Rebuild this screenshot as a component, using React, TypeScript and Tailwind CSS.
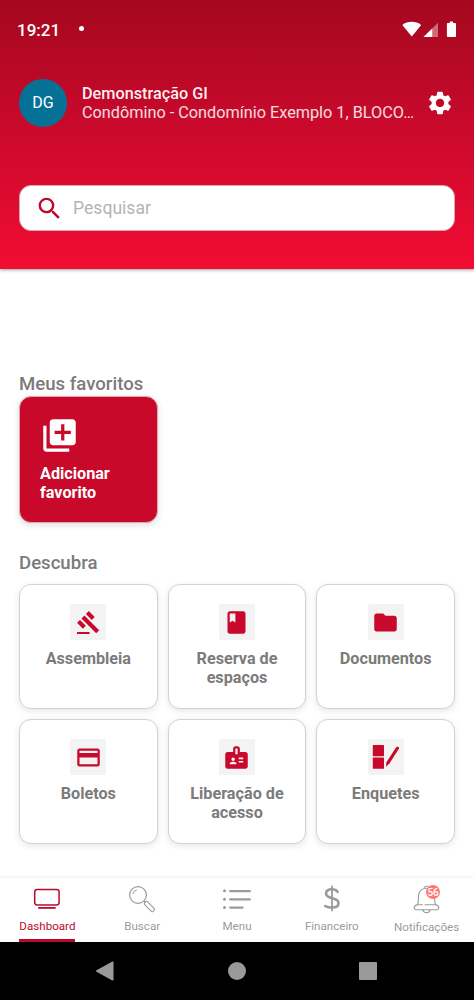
import type { ReactNode } from "react";
import {
  MdBadge,
  MdBook,
  MdCreditCard,
  MdFolder,
  MdGavel,
  MdLibraryAdd,
  MdSearch,
  MdSettings,
} from "react-icons/md";

interface Shortcut {
  label: string;
  icon: ReactNode;
}

interface NavItem {
  label: string;
  icon: ReactNode;
  active?: boolean;
  badge?: number;
}

function PollIcon() {
  return (
    <svg width="28" height="26" viewBox="0 0 28 26" fill="currentColor">
      <rect x="0.8" y="1" width="11.2" height="11.2" rx="0.6" />
      <rect x="0.8" y="13.6" width="11.2" height="11.2" rx="0.6" />
      <path d="M24.2 3.2c.9-1.2 3.6-.3 2.7 1.5L17.4 19.4l-3.4 3.4.4-4.6z" />
    </svg>
  );
}

function ScreenIcon() {
  return (
    <svg width="28" height="22" viewBox="0 0 28 22" fill="none" stroke="currentColor">
      <rect x="1.7" y="1.6" width="24.4" height="15.4" rx="2.4" strokeWidth="1.5" />
      <path d="M5.2 19.9h17.4" strokeWidth="1.8" />
    </svg>
  );
}

function MagnifierIcon() {
  return (
    <svg width="28" height="28" viewBox="0 0 28 28" fill="none" stroke="currentColor">
      <circle cx="10" cy="10" r="8.4" strokeWidth="1.2" />
      <path d="M4.8 9.2a5.4 5.4 0 0 1 4-4.3" strokeWidth="1" />
      <path d="m15.9 16 1.7 1.7" strokeWidth="1.2" />
      <rect
        x="0"
        y="-2"
        width="12"
        height="4"
        rx="1.2"
        strokeWidth="1.1"
        transform="translate(17.2 17.3) rotate(45)"
      />
    </svg>
  );
}

function ListIcon() {
  return (
    <svg width="30" height="22" viewBox="0 0 30 22" stroke="currentColor" strokeLinecap="round">
      <path d="M2.5 2.7h.01M2.5 11.2h.01M2.5 19.4h.01" strokeWidth="3" />
      <path d="M8.2 3.2h19.6M8.2 11.4h19.6M8.2 19.6h12.4" strokeWidth="2.3" />
    </svg>
  );
}

function DollarIcon() {
  return (
    <svg
      width="18"
      height="27"
      viewBox="0 0 18 27"
      fill="none"
      stroke="currentColor"
      strokeWidth="2.6"
      strokeLinecap="round"
    >
      <path d="M14.6 6.8C13.4 4.9 11.5 4.2 8.9 4.2c-3.5 0-5.9 1.7-5.9 4.4 0 6.4 12.5 2.9 12.5 9.3 0 3.1-2.7 4.6-6.4 4.6-3.1 0-5.5-.7-6.9-1.4" />
      <path d="M9 1.5v24" strokeWidth="1.8" />
    </svg>
  );
}

function BellIcon() {
  return (
    <svg
      width="27"
      height="29"
      viewBox="0 0 27 29"
      fill="none"
      stroke="currentColor"
      strokeWidth="1.1"
      strokeLinecap="round"
    >
      <path d="M11 3.2a2.6 2.6 0 0 1 5 0" />
      <path d="M4.4 19.6C6 17 5 12 5.8 8.9 6.9 5.3 9.7 3.2 13.5 3.2s6.6 2.1 7.7 5.7c.8 3.1-.2 8.1 1.4 10.7" />
      <path d="M4.4 19.6c-1.8.7-3.2 1.7-3.2 3.2 0 1.3.8 1.9 2 1.9h20.6c1.2 0 2-.6 2-1.9 0-1.5-1.4-2.5-3.2-3.2" />
      <path d="M4.4 19.7h5M12 19.7h10.6" />
      <path d="M9.8 24.7c.3 2 1.7 3 3.7 3s3.4-1 3.7-3" />
    </svg>
  );
}

const shortcuts: Shortcut[] = [
  { label: "Assembleia", icon: <MdGavel size={25} /> },
  { label: "Reserva de espaços", icon: <MdBook size={27} /> },
  { label: "Documentos", icon: <MdFolder size={27} /> },
  { label: "Boletos", icon: <MdCreditCard size={27} /> },
  { label: "Liberação de acesso", icon: <MdBadge size={27} /> },
  { label: "Enquetes", icon: <PollIcon /> },
];

const navItems: NavItem[] = [
  { label: "Dashboard", icon: <ScreenIcon />, active: true },
  { label: "Buscar", icon: <MagnifierIcon /> },
  { label: "Menu", icon: <ListIcon /> },
  { label: "Financeiro", icon: <DollarIcon /> },
  { label: "Notificações", icon: <BellIcon />, badge: 56 },
];

function StatusBar() {
  return (
    <div className="flex h-[60px] items-center justify-between px-[17px] text-white">
      <div className="flex items-center gap-[19px] pt-px">
        <span className="text-[17px] font-medium">19:21</span>
        <span className="mb-1 size-[5px] rounded-full bg-white" />
      </div>
      <svg width="55" height="18" viewBox="0 0 55 18" fill="currentColor">
        <path d="M.3 4C5.6-.4 13.9-.4 19.2 4L9.8 15.4z" />
        <path d="M21.5 16 36 1.7V16z" opacity="0.4" />
        <path d="M21.5 16 30.2 7.4V16z" />
        <path d="M47.8.6H51v1.5h2.1q.9 0 .9.9v12.2q0 .8-.9.8h-7.3q-.9 0-.9-.8V3q0-.9.9-.9h2z" />
      </svg>
    </div>
  );
}

function Header() {
  return (
    <header className="h-[269px] bg-linear-to-b from-[#a4081e] via-[#c8092b] via-45% to-[#f20c33] shadow-[0_1px_3px_rgba(0,0,0,0.4)]">
      <StatusBar />
      <div className="flex items-center px-[19px] pt-[19px]">
        <div className="flex size-12 shrink-0 items-center justify-center rounded-full bg-[#057197] text-base text-white">
          DG
        </div>
        <div className="mb-px ml-[15px] w-[334px] text-[16.25px] leading-[19px] text-white">
          <p className="font-medium text-white/95">Demonstração GI</p>
          <p className="whitespace-nowrap text-white/85">
            Condômino - Condomínio Exemplo 1, BLOCO…
          </p>
        </div>
        <MdSettings size={28} className="ml-[10px] shrink-0 text-white" />
      </div>
      <label className="mx-[19px] mt-[58px] flex h-[46px] items-center rounded-[12px] border border-[#d9a6ae] bg-white pl-[15px]">
        <MdSearch size={29} className="text-[#bb0a2d]" />
        <input
          type="text"
          placeholder="Pesquisar"
          className="ml-[9px] w-80 text-[17.6px] outline-none placeholder:text-[#b4b4b4]"
        />
      </label>
    </header>
  );
}

function ShortcutCard({ label, icon }: Shortcut) {
  return (
    <button
      type="button"
      className="flex h-[125px] flex-col items-center rounded-[12px] border border-[#d2d2d6] bg-white px-3 pt-[19px] shadow-[0_2px_6px_rgba(60,60,90,0.13)]"
    >
      <span className="flex size-9 shrink-0 items-center justify-center rounded-xs bg-[#f4f3f4] text-[#c8092b]">
        {icon}
      </span>
      <span className="mt-[9px] text-[16.2px] leading-[19px] font-bold text-[#7b7b7b]">
        {label}
      </span>
    </button>
  );
}

function BottomNav() {
  return (
    <nav className="grid h-[64px] grid-cols-5 bg-white shadow-[0_-1px_3px_rgba(0,0,0,0.07)]">
      {navItems.map((item) => (
        <button
          key={item.label}
          type="button"
          className={`flex flex-col items-center ${item.active ? "text-[#b90a2e]" : "text-[#9b9b9b]"}`}
        >
          <span
            className={`relative flex items-center justify-center ${item.badge ? "h-[42px]" : "h-[41px]"}`}
          >
            {item.icon}
            {item.badge ? (
              <span className="absolute top-[7px] right-0 flex size-[14px] items-center justify-center rounded-full bg-[#f77] text-[10px] font-medium text-white">
                {item.badge}
              </span>
            ) : null}
          </span>
          <span className="text-[11.6px] leading-[14px]">{item.label}</span>
          {item.active ? <span className="mt-auto h-[3px] w-14 bg-[#b90a2e]" /> : null}
        </button>
      ))}
    </nav>
  );
}

function SystemBar() {
  return (
    <div className="grid h-[58px] grid-cols-[210px_54px_207px] place-items-center bg-black text-[#9b989c]">
      <svg width="18" height="20" viewBox="0 0 18 20" fill="currentColor">
        <path d="M.5 9.2 16.3.6q1.2-.6 1.2.6v17.6q0 1.2-1.2.6L.5 10.8q-.9-.8 0-1.6z" />
      </svg>
      <span className="size-[18px] rounded-full bg-[#9b989c]" />
      <span className="size-[18px] rounded-[1px] bg-[#9b989c]" />
    </div>
  );
}

export default function App() {
  return (
    <div className="flex h-[1000px] w-[474px] flex-col overflow-hidden bg-white font-[Roboto,sans-serif]">
      <Header />
      <main className="flex-1 px-[19px] pt-[104px]">
        <h2 className="text-[18.6px] leading-[22px] font-medium text-[#7b7b7b]">Meus favoritos</h2>
        <button
          type="button"
          className="mt-px flex h-[127px] w-[139px] flex-col items-start rounded-[12px] border border-[#e0a9b2] bg-[#c80929] pt-[19px] pl-5 text-left text-white shadow-[0_2px_6px_rgba(60,60,90,0.18)]"
        >
          <MdLibraryAdd size={39} />
          <span className="mt-[9px] w-24 text-[16.2px] leading-[19px] font-bold">
            Adicionar favorito
          </span>
        </button>
        <h2 className="mt-[29px] text-[18.6px] leading-[22px] font-medium text-[#7b7b7b]">
          Descubra
        </h2>
        <div className="mt-[10px] grid grid-cols-3 gap-[10px]">
          {shortcuts.map((shortcut) => (
            <ShortcutCard key={shortcut.label} {...shortcut} />
          ))}
        </div>
      </main>
      <BottomNav />
      <SystemBar />
    </div>
  );
}
